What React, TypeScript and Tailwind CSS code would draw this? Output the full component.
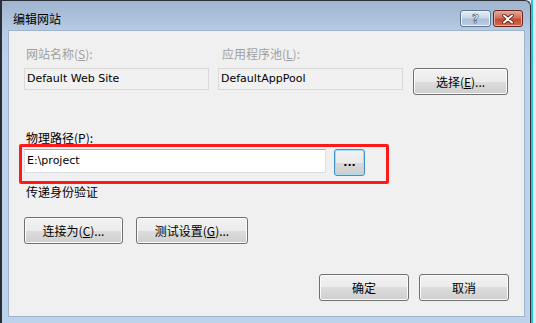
import React from 'react';

const cjk = "font-['Noto_Sans_CJK_SC','Microsoft_YaHei',sans-serif]";
const latin = "font-['DejaVu_Sans','Tahoma',sans-serif]";

function Btn({ children, className = '' }: { children: React.ReactNode; className?: string }) {
  return (
    <div
      className={`flex h-[27px] items-center justify-center rounded-[3px] border border-[#707070] bg-[linear-gradient(to_bottom,#f2f2f2_0%,#ebebeb_50%,#dddddd_50%,#cfcfcf_100%)] shadow-[inset_0_0_0_1px_#fbfbfb] text-[12px] leading-[14px] text-black ${cjk} ${className}`}
    >
      {children}
    </div>
  );
}

export default function App() {
  return (
    <div className="flex h-[323px] w-[536px] overflow-hidden bg-[#e8eef5]">
      {/* window */}
      <div className="flex h-[323px] w-[531px] flex-col border-l-2 border-t border-r border-[#2a2f36] bg-[linear-gradient(to_bottom,#9fb5d0_0px,#b6cbe4_30px,#bcd3eb_60px,#bcd3eb_100%)] rounded-tr-[6px]">
        {/* title bar */}
        <div className="flex h-[29px] items-start">
          <div className={`ml-[11px] mt-[11px] text-[12px] leading-[14px] text-black ${cjk}`}>编辑网站</div>
          <div className="ml-auto mt-[9px] flex gap-[2px] pr-[7px]">
            <div className="flex h-[17px] w-[31px] items-center justify-center rounded-[3px] border border-[#5f7590] bg-[linear-gradient(to_bottom,#e6eef7_0%,#c9d7e8_45%,#aebfd6_55%,#bccde2_100%)] shadow-[inset_0_0_0_1px_#eef3f9]">
              <span className="font-['DejaVu_Sans',sans-serif] text-[12px] font-bold leading-[12px] text-white [-webkit-text-stroke:0.6px_#3a4a5e]">?</span>
            </div>
            <div className="flex h-[17px] w-[30px] items-center justify-center rounded-[3px] border border-[#6b2418] bg-[linear-gradient(to_bottom,#e7a89a_0%,#d4715e_45%,#c44a33_55%,#d06a52_100%)] shadow-[inset_0_0_0_1px_#e9a999]">
              <svg width="14" height="10" viewBox="0 0 14 10">
                <path d="M3 1.5 L11 8.5 M11 1.5 L3 8.5" stroke="#4a1a12" strokeWidth="3.6" strokeLinecap="round" />
                <path d="M3 1.5 L11 8.5 M11 1.5 L3 8.5" stroke="#ffffff" strokeWidth="2" strokeLinecap="round" />
              </svg>
            </div>
          </div>
        </div>

        {/* client area */}
        <div className="relative ml-[6px] mr-[5px] flex h-[287px] flex-col border border-[#9fb3cc] bg-[#f0f0f0] px-[15px] pt-[16px]">
          <div className={`flex text-[12px] leading-[14px] text-[#a0a0a0] ${cjk}`}>
            <div className="w-[194px] pl-[2px]">
              网站名称(<u>S</u>):
            </div>
            <div className="pl-[4px]">
              应用程序池(<u>L</u>):
            </div>
          </div>

          <div className="mt-[7px] flex items-start">
            <div className={`flex h-[22px] w-[185px] items-center border border-[#d9d9d9] bg-[#f1f1f1] pl-[2px] text-[11px] text-black ${latin}`}>
              Default Web Site
            </div>
            <div className={`ml-[9px] flex h-[22px] w-[185px] items-center border border-[#d9d9d9] bg-[#f1f1f1] pl-[2px] text-[11px] text-black ${latin}`}>
              DefaultAppPool
            </div>
            <Btn className="ml-[10px] w-[95px]">
              选择(<u>E</u>)...
            </Btn>
          </div>

          <div className={`mt-[36px] pl-[2px] text-[12px] leading-[14px] text-black ${cjk}`}>
            物理路径(<u>P</u>):
          </div>

          <div className="mt-[4px] flex items-start">
            <div className={`flex h-[24px] w-[302px] items-center border border-[#dcdfe4] border-t-[#abadb3] bg-white pl-[2px] text-[11px] text-black ${latin}`}>
              E:\project
            </div>
            <div className="ml-[8px] flex h-[27px] w-[31px] items-center justify-center rounded-[3px] border border-[#3c8fd0] bg-[linear-gradient(to_bottom,#f1f1f1_0%,#eaeaea_50%,#dadada_50%,#cdcdcd_100%)] shadow-[inset_0_0_0_1px_#a6dcf6]">
              <span className="font-['DejaVu_Sans',sans-serif] text-[11px] font-bold leading-[10px] text-black">...</span>
            </div>
          </div>

          <div className={`mt-[9px] pl-[2px] text-[12px] leading-[14px] text-black ${cjk}`}>传递身份验证</div>

          <div className="mt-[18px] flex gap-[13px]">
            <Btn className="w-[99px]">
              连接为(<u>C</u>)...
            </Btn>
            <Btn className="w-[112px]">
              测试设置(<u>G</u>)...
            </Btn>
          </div>

          <div className="mt-[30px] flex justify-end gap-[10px]">
            <Btn className="w-[90px]">确定</Btn>
            <Btn className="w-[90px]">取消</Btn>
          </div>

          {/* annotation */}
          <div className="absolute left-[10px] top-[113px] h-[40px] w-[370px] rounded-[2px] border-[3px] border-[#ff1a1a]" />
        </div>
      </div>
      {/* desktop edge behind */}
      <div className="flex">
        <div className="w-[2px] bg-[#24c3e0]" />
        <div className="w-[3px] bg-[#dfe7f0]" />
      </div>
    </div>
  );
}
